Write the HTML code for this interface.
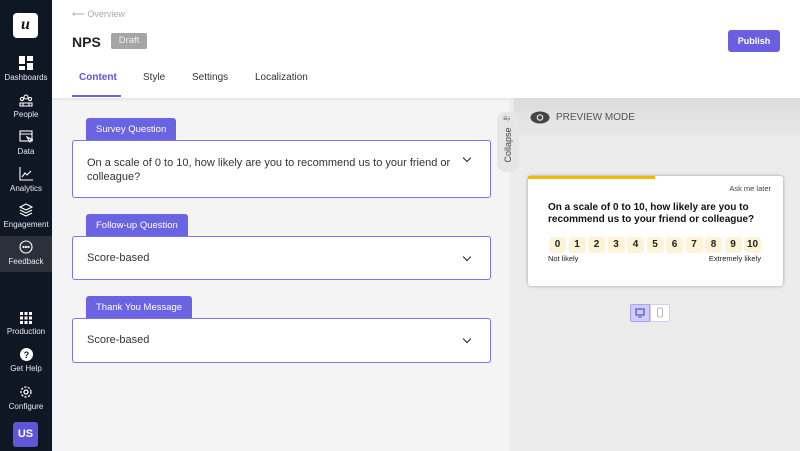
<!DOCTYPE html>
<html><head><meta charset="utf-8"><style>
*{box-sizing:border-box;margin:0;padding:0}
body{width:800px;height:451px;overflow:hidden;font-family:"Liberation Sans",sans-serif;background:#fff;position:relative}
.sb{position:absolute;left:0;top:0;width:52px;height:451px;background:#0f1624;color:#fff}
.logo{position:absolute;left:13px;top:13px;width:25px;height:25px;background:#fff;border-radius:4px;color:#111;font-family:"Liberation Serif",serif;font-style:italic;font-weight:bold;font-size:16px;text-align:center;line-height:24px}
.it{position:absolute;left:0;width:52px;text-align:center;font-size:8px;color:#e6e8ee}
.it svg{display:block;margin:0 auto 3px}
.act{background:#2b303b}
.us{position:absolute;left:13px;top:422px;width:25px;height:25px;background:#5f55d6;border-radius:3px;font-weight:bold;font-size:11px;text-align:center;line-height:25px}
.hdr{position:absolute;left:52px;top:0;right:0;height:98px;background:#fff}
.ov{position:absolute;left:20px;top:9px;font-size:9px;color:#aaa}
.nps{position:absolute;left:20px;top:34px;font-size:14px;font-weight:bold;color:#222}
.draft{position:absolute;left:59px;top:33px;width:36px;height:16px;background:#a5a5a5;color:#eee;font-size:9.5px;text-align:center;line-height:16px;border-radius:2px}
.pub{position:absolute;right:20px;top:30px;width:52px;height:22px;background:#6a5fe0;color:#fff;border-radius:3px;font-size:9px;font-weight:bold;text-align:center;line-height:22px}
.tab{position:absolute;top:72px;font-size:10px;color:#333}
.main{position:absolute;left:52px;top:98px;width:458px;height:353px;background:#f4f4f4;box-shadow:inset 0 3px 3px -2px #ddd}
.lbl{position:absolute;left:34px;height:23px;background:#6a63e2;color:#fff;font-size:9.5px;line-height:23px;padding:0 10px;border-radius:3px 3px 0 0}
.box{position:absolute;left:20px;width:419px;background:#fff;border:1.5px solid #7b74ea;border-radius:3px;font-size:11px;color:#333;padding:0 40px 0 14px;white-space:nowrap}
.chev{position:absolute;right:20px;width:6px;height:6px;border-right:1.8px solid #222;border-bottom:1.8px solid #222;transform:rotate(45deg)}
.rp{position:absolute;left:510px;top:98px;width:290px;height:353px;background:#ececec}
.band{position:absolute;left:4px;top:0;right:0;height:38px;background:linear-gradient(#dcdcdc,#e8e8e8)}
.col{position:absolute;left:-13px;top:14px;width:22px;height:60px;background:#e6e6e6;border-radius:8px;}
.card{position:absolute;left:18px;top:78px;width:255px;height:110px;background:#fff;border-radius:3px;box-shadow:0 0 3px #999}
.n{display:inline-block;width:17px;height:16px;background:#fdf3d6;border-radius:3px;text-align:center;line-height:16px;font-size:10px;font-weight:bold;margin-right:2.5px;color:#222}
</style></head><body>
<div class="sb">
<div class="logo">u</div>
<div class="it" style="top:56px"><svg width="14" height="14"><rect x="0" y="0" width="6" height="8" fill="#fff"/><rect x="8" y="0" width="6" height="5" fill="#fff"/><rect x="0" y="10" width="6" height="4" fill="#fff"/><rect x="8" y="7" width="6" height="7" fill="#fff"/></svg>Dashboards</div>
<div class="it" style="top:94px"><svg width="14" height="13" fill="none" stroke="#fff" stroke-width="1.1"><circle cx="7" cy="3" r="2"/><circle cx="3" cy="5" r="1.6"/><circle cx="11" cy="5" r="1.6"/><path d="M1 12v-3h12v3zM4 9v3M10 9v3"/></svg>People</div>
<div class="it" style="top:130px"><svg width="14" height="14" fill="none" stroke="#fff" stroke-width="1.1"><rect x="1" y="1" width="12" height="10"/><path d="M1 4h12M8 7l3 5 1-2 2 0z"/></svg>Data</div>
<div class="it" style="top:167px"><svg width="14" height="14" fill="none" stroke="#fff" stroke-width="1.1"><path d="M1 0v13h13M3 10l3-4 2 2 4-4"/></svg>Analytics</div>
<div class="it" style="top:203px"><svg width="14" height="14" fill="none" stroke="#fff" stroke-width="1.1"><path d="M7 1l6 3-6 3-6-3zM1 7l6 3 6-3M1 10l6 3 6-3"/></svg>Engagement</div>
<div class="it act" style="top:236px;height:36px;padding-top:4px"><svg width="14" height="14" fill="none" stroke="#fff" stroke-width="1.1"><circle cx="7" cy="7" r="6"/><circle cx="4.5" cy="7" r=".6" fill="#fff"/><circle cx="7" cy="7" r=".6" fill="#fff"/><circle cx="9.5" cy="7" r=".6" fill="#fff"/></svg>Feedback</div>
<div class="it" style="top:312px"><svg width="12" height="12" fill="#fff"><rect x="0" y="0" width="3" height="3"/><rect x="4.5" y="0" width="3" height="3"/><rect x="9" y="0" width="3" height="3"/><rect x="0" y="4.5" width="3" height="3"/><rect x="4.5" y="4.5" width="3" height="3"/><rect x="9" y="4.5" width="3" height="3"/><rect x="0" y="9" width="3" height="3"/><rect x="4.5" y="9" width="3" height="3"/><rect x="9" y="9" width="3" height="3"/></svg>Production</div>
<div class="it" style="top:348px"><svg width="13" height="13"><circle cx="6.5" cy="6.5" r="6.5" fill="#fff"/><text x="6.5" y="10" font-size="9" font-weight="bold" text-anchor="middle" fill="#0f1624" font-family="Liberation Sans">?</text></svg>Get Help</div>
<div class="it" style="top:385px"><svg width="14" height="14" fill="none" stroke="#fff" stroke-width="1.3"><circle cx="7" cy="7" r="2"/><circle cx="7" cy="7" r="5" stroke-dasharray="2.2 1.4"/></svg>Configure</div>
<div class="us">US</div>
</div>
<div class="hdr">
<div class="ov">⟵ Overview</div>
<div class="nps">NPS</div>
<div class="draft">Draft</div>
<div class="pub">Publish</div>
<div class="tab" style="left:27px;color:#5d55d8;font-weight:bold">Content</div>
<div style="position:absolute;left:20px;top:95px;width:49px;height:2px;background:#6a63e2"></div>
<div class="tab" style="left:91px">Style</div>
<div class="tab" style="left:140px">Settings</div>
<div class="tab" style="left:203px">Localization</div>
</div>
<div class="main">
<div class="lbl" style="top:20px">Survey Question</div>
<div class="box" style="top:42px;height:58px;padding-top:15px;line-height:14px">On a scale of 0 to 10, how likely are you to recommend us to your friend or<br>colleague?<div class="chev" style="top:14px"></div></div>
<div class="lbl" style="top:116px">Follow-up Question</div>
<div class="box" style="top:138px;height:44px;line-height:42px">Score-based<div class="chev" style="top:17px"></div></div>
<div class="lbl" style="top:198px">Thank You Message</div>
<div class="box" style="top:220px;height:45px;line-height:43px">Score-based<div class="chev" style="top:17px"></div></div>
</div>
<div class="rp">
<div class="band"></div>
<div class="col"><div style="position:absolute;left:-14px;top:28px;width:50px;transform:rotate(-90deg);font-size:9px;color:#444;text-align:center">Collapse</div><div style="position:absolute;left:6px;top:2px;font-size:8px;color:#555">≡›</div></div>
<svg style="position:absolute;left:20px;top:13px" width="20" height="13"><ellipse cx="10" cy="6.5" rx="9.5" ry="6" fill="#444"/><circle cx="10" cy="6.5" r="3.3" fill="#e0e0e0"/><circle cx="10" cy="6.5" r="2" fill="#444"/></svg>
<div style="position:absolute;left:46px;top:14px;font-size:10px;color:#555">PREVIEW MODE</div>
<div class="card">
<div style="position:absolute;left:0;top:0;width:127px;height:3px;background:#f5b800"></div>
<div style="position:absolute;right:12px;top:8px;font-size:7.5px;color:#444">Ask me later</div>
<div style="position:absolute;left:20px;top:26px;font-size:10px;font-weight:bold;color:#111;line-height:12px">On a scale of 0 to 10, how likely are you to<br>recommend us to your friend or colleague?</div>
<div style="position:absolute;left:21px;top:58px;white-space:nowrap"><span class="n">0</span><span class="n">1</span><span class="n">2</span><span class="n">3</span><span class="n">4</span><span class="n">5</span><span class="n">6</span><span class="n">7</span><span class="n">8</span><span class="n">9</span><span class="n" style="width:17px">10</span></div>
<div style="position:absolute;left:20px;top:78px;font-size:7.5px;color:#222">Not likely</div>
<div style="position:absolute;right:22px;top:78px;font-size:7.5px;color:#222">Extremely likely</div>
</div>
<div style="position:absolute;left:120px;top:206px;width:20px;height:18px;background:#cfcdf5;border:1px solid #a9a3ee;border-radius:2px 0 0 2px"><svg width="18" height="16"><rect x="5" y="4" width="8" height="6" fill="none" stroke="#5d55d8" stroke-width="1.3"/><path d="M7 12h4" stroke="#5d55d8"/></svg></div>
<div style="position:absolute;left:140px;top:206px;width:20px;height:18px;background:#fff;border:1px solid #cfcdf5;border-radius:0 2px 2px 0"><svg width="18" height="16"><rect x="6.5" y="3" width="5" height="9" rx="1" fill="none" stroke="#bbb"/></svg></div>
</div>
</body></html>
